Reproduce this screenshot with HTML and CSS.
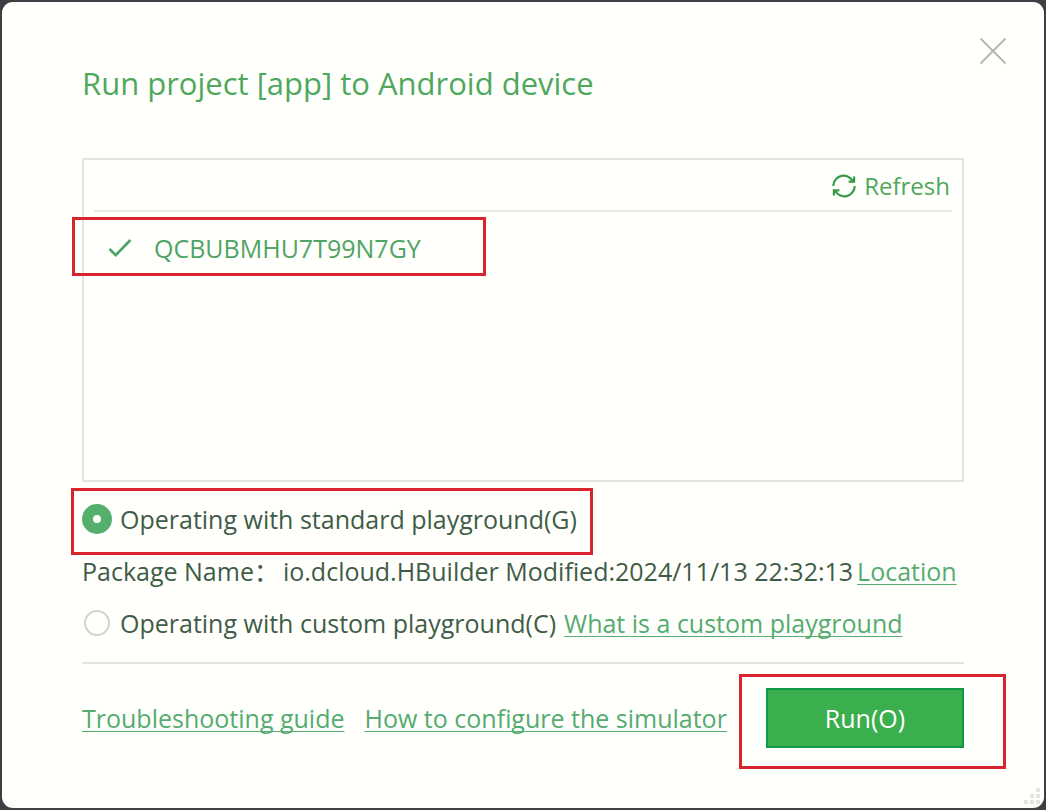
FILE: index.html
```html
<!DOCTYPE html>
<html lang="en">
<head>
<meta charset="utf-8">
<meta name="viewport" content="width=device-width, initial-scale=1">
<title>Run project [app] to Android device</title>
<link rel="stylesheet" href="styles.css">
</head>
<body>
<main class="dialog">
  <header class="dialog-header">
    <h1 class="title">Run project [app] to Android device</h1>
    <button class="close" type="button" aria-label="Close">
      <svg width="28" height="28" viewBox="0 0 28 28" aria-hidden="true"><path d="M1.5 1.5 26.5 26.5M26.5 1.5 1.5 26.5"/></svg>
    </button>
  </header>

  <section class="devices" aria-label="Devices">
    <div class="toolbar">
      <button class="refresh" type="button">
        <svg width="24" height="24" viewBox="0 0 24 24" aria-hidden="true">
          <path class="stroke" d="M1.3 12A10.4 10.4 0 0 1 21 7.4M22.7 12A10.4 10.4 0 0 1 3 16.6"/>
          <path class="head" d="M21 2.6h2.2v6.2h-6.6V6.6H21zM3 21.4H.8v-6.2h6.6v2.2H3z"/>
        </svg>
        <span>Refresh</span>
      </button>
    </div>
    <ul class="device-list">
      <li class="device">
        <svg width="24" height="20" viewBox="0 0 24 20" aria-hidden="true"><path d="m1.5 11 6.2 6.2L22.4 2"/></svg>
        <span>QCBUBMHU7T99N7GY</span>
        <span class="marker marker-device"></span>
      </li>
    </ul>
  </section>

  <form class="options">
    <div class="row">
      <input class="radio" type="radio" name="playground" id="standard" checked>
      <label for="standard">Operating with standard playground(G)</label>
      <span class="marker marker-option"></span>
    </div>
    <div class="row row-package">
      <span>Package Name：</span>
      <span>io.dcloud.HBuilder Modified:2024/11/13 22:32:13</span>
      <a class="link" href="#location">Location</a>
    </div>
    <div class="row">
      <input class="radio" type="radio" name="playground" id="custom">
      <label for="custom">Operating with custom playground(C)</label>
      <a class="link" href="#custom-playground">What is a custom playground</a>
    </div>
  </form>

  <footer class="dialog-footer">
    <nav class="help">
      <a class="link" href="#troubleshooting">Troubleshooting guide</a>
      <a class="link" href="#simulator">How to configure the simulator</a>
    </nav>
    <div class="action">
      <button class="run" type="button">Run(O)</button>
      <span class="marker marker-run"></span>
    </div>
  </footer>
  <svg class="grip" width="16" height="16" viewBox="0 0 16 16" aria-hidden="true"><path d="M12 0h4v4h-4zM6 6h4v4H6zM12 6h4v4h-4zM0 12h4v4H0zM6 12h4v4H6zM12 12h4v4h-4z"/></svg>
</main>
</body>
</html>
```
FILE: styles.css
```css
* { box-sizing: border-box; }

body {
  margin: 0;
  padding: 2px;
  background: #403e42;
  color: #3f5c46;
  font: 25px/32px "Open Sans", "Noto Sans CJK SC", sans-serif;
}

button {
  border: 0;
  padding: 0;
  background: none;
  font: inherit;
  cursor: pointer;
}

svg { display: block; flex: none; }

.dialog {
  position: relative;
  display: flex;
  flex-direction: column;
  min-height: calc(100vh - 4px);
  padding: 60px 80px;
  border-radius: 11px;
  background: #fffffc;
}

.title {
  margin: 0;
  color: #4fa85c;
  font-size: 31px;
  font-weight: 400;
  line-height: 42px;
}

.close {
  position: absolute;
  top: 35px;
  right: 37px;
}

.close path {
  fill: none;
  stroke: #b4b4b4;
  stroke-width: 1.8;
}

.devices {
  flex: 1 0 200px;
  margin-top: 54px;
  padding: 0 10px;
  border: 2px solid #e4e4e4;
}

.toolbar {
  display: flex;
  justify-content: flex-end;
  height: 52px;
  padding-right: 2px;
  border-bottom: 2px solid #e8e8e8;
}

.refresh {
  display: flex;
  align-items: center;
  gap: 8px;
  padding-top: 2px;
  color: #4fa85c;
  font-size: 24px;
}

.refresh .stroke {
  fill: none;
  stroke: #369a48;
  stroke-width: 2.2;
}

.refresh .head { fill: #369a48; }

.device-list {
  margin: 0;
  padding: 0;
  list-style: none;
}

.device {
  position: relative;
  display: flex;
  align-items: center;
  gap: 22px;
  height: 72px;
  padding-left: 14px;
  color: #4fa564;
}

.device path {
  fill: none;
  stroke: #45a561;
  stroke-width: 2.6;
}

.options { padding: 11px 0 13px; }

.row {
  position: relative;
  display: flex;
  align-items: center;
  gap: 8px;
  height: 52px;
  white-space: nowrap;
}

.row-package { gap: 4px; }

.radio {
  appearance: none;
  flex: none;
  width: 26px;
  height: 26px;
  margin: 0 2px;
  border: 2px solid #d2d2d2;
  border-radius: 50%;
}

.radio:checked {
  width: 30px;
  height: 30px;
  margin: 0;
  border: 11px solid #54b06c;
}

.link {
  color: #55ab70;
  text-decoration: underline;
  text-decoration-thickness: 1px;
  text-decoration-skip-ink: none;
  text-underline-offset: 3px;
}

.dialog-footer {
  display: flex;
  align-items: flex-end;
  justify-content: space-between;
  padding-top: 24px;
  border-top: 2px solid #e4e4e4;
}

.help {
  display: flex;
  gap: 20px;
  align-self: center;
  white-space: nowrap;
}

.action { position: relative; }

.run {
  display: block;
  width: 198px;
  height: 60px;
  border: 2px solid #0f9b45;
  background: #3bae4e;
  color: #fff;
}

.marker {
  position: absolute;
  border: 3px solid #d8252d;
  pointer-events: none;
}

.marker-device { top: 5px; left: -22px; width: 414px; height: 59px; }
.marker-option { top: -5px; left: -11px; width: 522px; height: 67px; }
.marker-run { inset: -14px -42px -21px -27px; }

.grip {
  position: absolute;
  right: 4px;
  bottom: 4px;
  fill: #e4e4e4;
}
```
